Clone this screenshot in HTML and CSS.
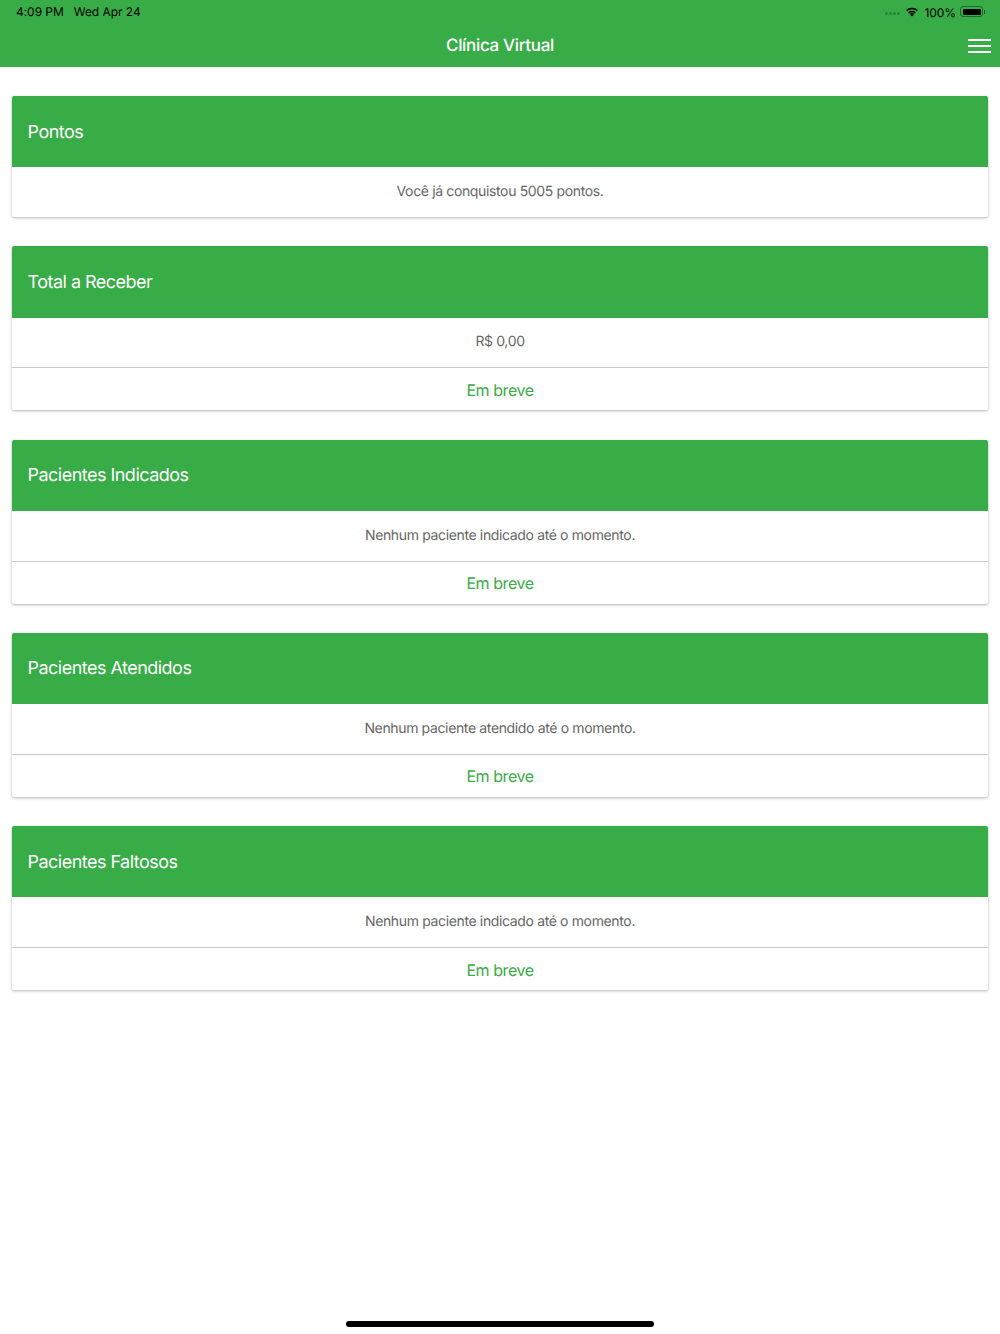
FILE: index.html
```html
<!DOCTYPE html>
<html lang="pt-BR">
<head>
  <meta charset="UTF-8">
  <meta name="viewport" content="width=device-width, initial-scale=1.0">
  <title>Clínica Virtual</title>
  <link rel="stylesheet" href="styles.css">
</head>
<body>
  <header class="topbar">
    <div class="status">
      <div class="status-left">
        <span>4:09 PM</span>
        <span>Wed Apr 24</span>
      </div>
      <div class="status-right">
        <span class="signal"><i></i><i></i><i></i><i></i></span>
        <svg class="wifi" width="14" height="11" viewBox="0 0 14 11">
          <path d="M7 10.5 4.8 8a3.2 3.2 0 0 1 4.4 0z" fill="#000"/>
          <path d="M3.7 6.8a4.9 4.9 0 0 1 6.6 0" fill="none" stroke="#000" stroke-width="1.6"/>
          <path d="M1.6 4.6a7.9 7.9 0 0 1 10.8 0" fill="none" stroke="#000" stroke-width="1.6"/>
        </svg>
        <span class="pct">100%</span>
        <span class="battery"><span class="battery-fill"></span></span>
        <span class="battery-tip"></span>
      </div>
    </div>
    <div class="navbar">
      <h1>Clínica Virtual</h1>
      <button class="menu" aria-label="Menu"><span></span><span></span><span></span></button>
    </div>
  </header>

  <main class="content">
    <section class="card">
      <h2>Pontos</h2>
      <p class="card-text">Você já conquistou 5005 pontos.</p>
    </section>
    <section class="card">
      <h2>Total a Receber</h2>
      <p class="card-text">R$ 0,00</p>
      <a class="card-link">Em breve</a>
    </section>
    <section class="card">
      <h2>Pacientes Indicados</h2>
      <p class="card-text">Nenhum paciente indicado até o momento.</p>
      <a class="card-link">Em breve</a>
    </section>
    <section class="card">
      <h2>Pacientes Atendidos</h2>
      <p class="card-text">Nenhum paciente atendido até o momento.</p>
      <a class="card-link">Em breve</a>
    </section>
    <section class="card">
      <h2>Pacientes Faltosos</h2>
      <p class="card-text">Nenhum paciente indicado até o momento.</p>
      <a class="card-link">Em breve</a>
    </section>
  </main>

  <div class="home-bar"></div>
</body>
</html>
```

FILE: styles.css
```css
* {
  box-sizing: border-box;
}
html, body {
  height: 1334px;
}
body {
  margin: 0;
  font-family: Inter, "Liberation Sans", sans-serif;
  text-rendering: geometricPrecision;
  background: #fff;
  overflow: hidden;
}
.topbar {
  height: 67px;
  background: #38ac46;
}
.status {
  height: 23px;
  padding: 0 15px 0 16px;
  display: flex;
  justify-content: space-between;
  align-items: center;
  font-size: 12px;
  letter-spacing: -0.05px;
  color: #000;
}
.status-left {
  display: flex;
  gap: 10px;
}
.status-right {
  display: flex;
  align-items: center;
}
.signal {
  display: flex;
  gap: 1px;
  margin-right: 5px;
}
.signal i {
  width: 3px;
  height: 3px;
  margin-top: 3px;
  border-radius: 50%;
  background: rgba(0, 0, 0, 0.25);
}
.wifi {
  margin-right: 5px;
}
.pct {
  margin: 2px 4px 0 0;
  font-size: 12px;
}
.battery {
  width: 23px;
  height: 11px;
  padding: 1.5px;
  border: 1px solid rgba(0, 0, 0, 0.4);
  border-radius: 3px;
}
.battery-fill {
  display: block;
  height: 100%;
  background: #000;
  border-radius: 1px;
}
.battery-tip {
  width: 1px;
  height: 4px;
  margin-left: 1px;
  background: rgba(0, 0, 0, 0.5);
}
.navbar {
  height: 44px;
  position: relative;
  display: flex;
  justify-content: center;
  align-items: center;
}
.navbar h1 {
  margin: 1px 0 0;
  font-size: 17px;
  font-weight: 500;
  letter-spacing: -0.33px;
  color: #fff;
}
.menu {
  position: absolute;
  right: 9px;
  top: 16px;
  width: 23px;
  padding: 0;
  border: none;
  background: none;
  display: flex;
  flex-direction: column;
  gap: 4px;
}
.menu span {
  height: 2px;
  background: #fff;
}
.content {
  padding: 29px 12px 0;
  display: flex;
  flex-direction: column;
  gap: 29.35px;
}
.card {
  background: #fff;
  border-radius: 2px;
  overflow: hidden;
  box-shadow: 0 1px 3px rgba(0, 0, 0, 0.3);
}
.card h2 {
  margin: 0;
  height: 71.2px;
  padding: 1px 0 0 15.5px;
  display: flex;
  align-items: center;
  background: #38ac46;
  color: #fff;
  font-size: 18px;
  font-weight: 400;
  letter-spacing: -0.52px;
}
.card-text {
  margin: 0;
  height: 49.8px;
  display: flex;
  justify-content: center;
  align-items: center;
  padding-bottom: 1px;
  font-size: 14px;
  letter-spacing: -0.36px;
  color: #666;
}
.card-link {
  height: 42.95px;
  padding-top: 1px;
  border-top: 1px solid #c8c8c8;
  display: flex;
  justify-content: center;
  align-items: center;
  font-size: 16px;
  letter-spacing: -0.45px;
  color: #38ac46;
}
.home-bar {
  position: absolute;
  left: 346px;
  top: 1321px;
  width: 308px;
  height: 6px;
  border-radius: 3px;
  background: #000;
}
```
